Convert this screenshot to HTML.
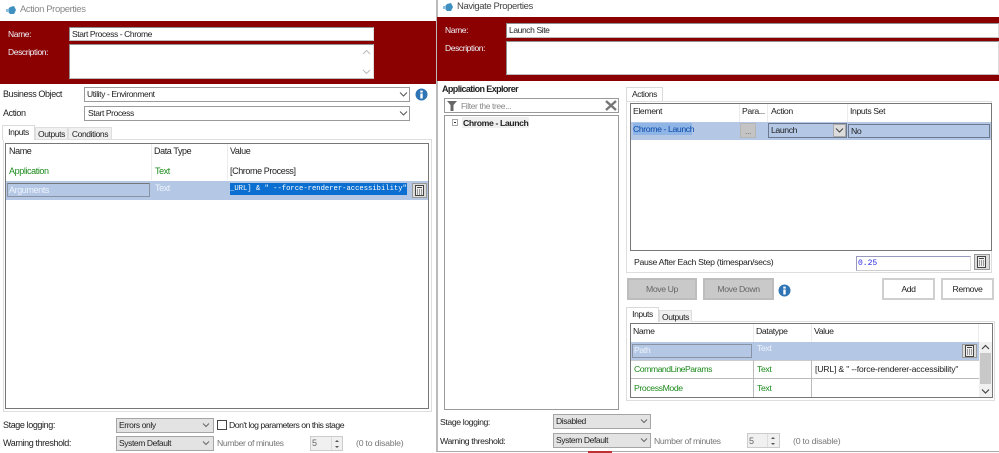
<!DOCTYPE html>
<html><head><meta charset="utf-8"><style>
html,body{margin:0;padding:0;background:#fff}
#r{position:relative;width:999px;height:453px;overflow:hidden;background:#fff;font-family:"Liberation Sans",sans-serif;font-size:9px;letter-spacing:-.4px;color:#222;filter:blur(.3px)}
#r div,#r svg{position:absolute;box-sizing:border-box}
.t{height:14px;line-height:14px;white-space:pre}
.g{color:#1c8a1c}.w{color:#eef3fb}.l{color:#666}
.i{background:#fff;border:1px solid #8f8f8f;border-right-color:#ddd;border-bottom-color:#bbb}
.s{background:#fff;border:1px solid #9a9a9a}
.sg{background:#e3e3e3;border:1px solid #a5a5a5}
.b{background:#8b0000}
.tb{background:#f0f0f0;border:1px solid #dedede;border-bottom:0}
.ta{background:#fff;border:1px solid #dadada;border-bottom:0}
.p{border:1px solid #dedede}
.tbl{border:1px solid #777;background:#fff}
.sel{background:#b4c8e6}
.btn{background:#c9c9c9;border:2px solid #bdbdbd;color:#666;text-align:center;line-height:19px}
.btw{background:#fff;border:2px solid #cfcfcf;color:#222;text-align:center;line-height:19px}
.hl{background:#0a6fd0;color:#fff}
.v{background:#ececec;width:1px}
.c{background:#dcdcdc;border:1px solid #999}
</style></head><body><div id="r">

<!-- LEFT WINDOW -->
<svg style="left:6px;top:5px" width="11" height="11" viewBox="0 0 11 11"><path d="M1 5.5 4 2 8 1 10 5 8 9 4 9Z" fill="#3f8fc0"/><path d="M0 4h3v3H0z" fill="#8cc0de"/></svg>
<div class="t l" style="left:20px;top:3px;font-size:9.5px;color:#888">Action Properties</div>
<div class="b" style="left:0;top:21px;width:437px;height:63px"></div>
<div class="t w" style="left:8px;top:27px;font-size:8.5px">Name:</div>
<div class="t w" style="left:8px;top:45px;font-size:8.5px">Description:</div>
<div class="i t" style="left:69px;top:27px;width:305px;height:14px;line-height:12px;padding-left:2px;font-size:8.5px">Start Process - Chrome</div>
<div class="i" style="left:69px;top:44px;width:305px;height:35px"></div>
<svg style="left:362px;top:67px" width="9" height="9"><path d="M1 3l3.5 3.5L8 3" fill="none" stroke="#bbb"/></svg>
<svg style="left:362px;top:48px" width="9" height="9"><path d="M1 6l3.5-3.5L8 6" fill="none" stroke="#bbb"/></svg>

<div class="t" style="left:3px;top:87px;font-size:9px">Business Object</div>
<div class="t" style="left:3px;top:106px;font-size:9px">Action</div>
<div class="s t" style="left:84px;top:87px;width:326px;height:15px;line-height:13px;padding-left:2px;font-size:8.5px">Utility - Environment</div>
<div class="s t" style="left:84px;top:106px;width:326px;height:15px;line-height:13px;padding-left:3px;font-size:8.5px">Start Process</div>
<svg style="left:399px;top:91px" width="9" height="7"><path d="M1 1.5l3.5 3.5L8 1.5" fill="none" stroke="#555"/></svg>
<svg style="left:399px;top:110px" width="9" height="7"><path d="M1 1.5l3.5 3.5L8 1.5" fill="none" stroke="#555"/></svg>
<svg style="left:415px;top:88px" width="13" height="13"><circle cx="6.5" cy="6.5" r="6" fill="#2f75b5"/><rect x="5.3" y="5.5" width="2.4" height="5" fill="#fff"/><rect x="5.3" y="2.6" width="2.4" height="2" fill="#fff"/></svg>

<div class="p" style="left:3px;top:139px;width:429px;height:273px"></div>
<div class="tb t" style="left:35px;top:127px;width:33px;height:12px;line-height:12px;text-align:center;font-size:8.5px">Outputs</div>
<div class="tb t" style="left:68px;top:127px;width:44px;height:12px;line-height:12px;text-align:center;font-size:8.5px">Conditions</div>
<div class="ta t" style="left:2px;top:125px;width:33px;height:15px;line-height:13px;text-align:center;font-size:8.5px">Inputs</div>
<div class="tbl" style="left:5px;top:143px;width:424px;height:266px"></div>
<div class="t" style="left:9px;top:144px;font-size:9px">Name</div>
<div class="t" style="left:154px;top:144px;font-size:9px">Data Type</div>
<div class="t" style="left:230px;top:144px;font-size:9px">Value</div>
<div class="v" style="left:151px;top:144px;height:36px"></div>
<div class="v" style="left:227px;top:144px;height:36px"></div>
<div class="t g" style="left:9px;top:164px;font-size:9px">Application</div>
<div class="t g" style="left:155px;top:164px;font-size:9px">Text</div>
<div class="t" style="left:230px;top:164px;font-size:9px">[Chrome Process]</div>
<div class="sel" style="left:6px;top:181px;width:422px;height:19px"></div>
<div class="sel" style="left:7px;top:183px;width:143px;height:14px;border:1px solid #8a93a3;border-top-color:#777"></div>
<div class="t w" style="left:9px;top:183px;font-size:9px">Arguments</div>
<div class="t w" style="left:155px;top:181px;font-size:9px">Text</div>
<div class="t hl" style="left:230px;top:183px;width:177px;height:12px;line-height:12px;font-family:'Liberation Mono',monospace;font-size:7.2px;letter-spacing:0;overflow:hidden">_URL] &amp; " --force-renderer-accessibility"</div>
<div class="c" style="left:412px;top:183px;width:15px;height:15px"></div>
<svg style="left:414px;top:185px" width="11" height="11"><rect x="1.5" y="0.5" width="8" height="10" fill="#eee" stroke="#444"/><path d="M3 2.5h5M3 5h1M5 5h1M7 5h1M3 7h1M5 7h1M7 7h1M3 9h1M5 9h1M7 9h1" stroke="#444"/></svg>

<div class="t" style="left:3px;top:418px;font-size:9px">Stage logging:</div>
<div class="t" style="left:3px;top:436px;font-size:9px">Warning threshold:</div>
<div class="sg t" style="left:116px;top:418px;width:98px;height:15px;line-height:13px;padding-left:2px;font-size:8.5px">Errors only</div>
<div class="sg t" style="left:116px;top:436px;width:98px;height:15px;line-height:13px;padding-left:2px;font-size:8.5px">System Default</div>
<svg style="left:202px;top:422px" width="9" height="7"><path d="M1 1.5l3 3 3-3" fill="none" stroke="#666"/></svg>
<svg style="left:202px;top:440px" width="9" height="7"><path d="M1 1.5l3 3 3-3" fill="none" stroke="#666"/></svg>
<div style="left:217px;top:420px;width:10px;height:10px;background:#fff;border:1px solid #444"></div>
<div class="t" style="left:229px;top:418px;font-size:8.7px;letter-spacing:-.5px">Don't log parameters on this stage</div>
<div class="t" style="left:217px;top:436px;font-size:8.7px;color:#777">Number of minutes</div>
<div style="left:310px;top:436px;width:33px;height:15px;background:#f0f0f0;border:1px solid #ccc"></div>
<div class="t" style="left:312px;top:436px;color:#666">5</div>
<div style="left:331px;top:437px;width:1px;height:13px;background:#ddd"></div>
<svg style="left:333px;top:438px" width="8" height="12"><path d="M2 4l2-2 2 2ZM2 8l2 2 2-2Z" fill="#555"/></svg>
<div class="t" style="left:356px;top:436px;font-size:8.7px;letter-spacing:-.2px;color:#777">(0 to disable)</div>

<!-- RIGHT WINDOW -->
<div style="left:436px;top:0;width:563px;height:452px;background:#fff;border-left:2px solid #bbb;border-bottom:1px solid #aaa"></div>
<svg style="left:443px;top:2px" width="11" height="11" viewBox="0 0 11 11"><path d="M1 5.5 4 2 8 1 10 5 8 9 4 9Z" fill="#3f8fc0"/><path d="M0 4h3v3H0z" fill="#8cc0de"/></svg>
<div class="t" style="left:457px;top:0;font-size:9.5px;color:#444">Navigate Properties</div>
<div class="b" style="left:437px;top:17px;width:562px;height:64px"></div>
<div class="t w" style="left:445px;top:23px;font-size:8.5px">Name:</div>
<div class="t w" style="left:445px;top:41px;font-size:8.5px">Description:</div>
<div class="i t" style="left:506px;top:23px;width:493px;height:15px;line-height:13px;padding-left:2px;font-size:8.5px">Launch Site</div>
<div class="i" style="left:506px;top:41px;width:493px;height:34px"></div>

<div class="t" style="left:442px;top:82px;font-size:9px;letter-spacing:-.6px;font-weight:bold">Application Explorer</div>
<div class="s" style="left:444px;top:98px;width:175px;height:15px"></div>
<svg style="left:447px;top:101px" width="11" height="10"><path d="M0 0h10L6.5 4v6h-3V4Z" fill="#666"/></svg>
<div class="t" style="left:461px;top:99px;font-size:8.5px;color:#888">Filter the tree...</div>
<svg style="left:605px;top:100px" width="12" height="11"><path d="M1 1l10 9M11 1L1 10" stroke="#777" stroke-width="2.4"/></svg>
<div class="s" style="left:444px;top:115px;width:175px;height:295px"></div>
<div style="left:452px;top:119px;width:6px;height:7px;border:1px solid #aaa"></div>
<div style="left:454px;top:122px;width:2px;height:1px;background:#333"></div>
<div style="left:462px;top:117px;width:67px;height:11px;background:#f0f0f0"></div>
<div class="t" style="left:463px;top:116px;font-size:8.7px;font-weight:bold;color:#222">Chrome - Launch</div>

<div class="ta t" style="left:626px;top:87px;width:37px;height:15px;line-height:13px;text-align:center;font-size:8.5px">Actions</div>
<div class="p" style="left:626px;top:101px;width:366px;height:172px"></div>
<div class="tbl" style="left:630px;top:103px;width:362px;height:148px"></div>
<div class="t" style="left:633px;top:104px;font-size:8.7px">Element</div>
<div class="t" style="left:742px;top:104px;font-size:8.7px">Para...</div>
<div class="t" style="left:771px;top:104px;font-size:8.7px">Action</div>
<div class="t" style="left:850px;top:104px;font-size:8.7px">Inputs Set</div>
<div class="v" style="left:739px;top:104px;height:18px"></div>
<div class="v" style="left:767px;top:104px;height:18px"></div>
<div class="v" style="left:847px;top:104px;height:18px"></div>
<div class="sel" style="left:631px;top:122px;width:360px;height:18px"></div>
<div class="t hl" style="left:633px;top:123px;width:59px;height:12px;line-height:12px;background:#8fb4e6;color:#0b4aa8;font-size:8.7px">Chrome - Launch</div>
<div style="left:740px;top:123px;width:16px;height:15px;background:#c4c4c4;border:1px solid #b5b5b5;color:#777;text-align:center;line-height:14px">...</div>
<div style="left:768px;top:123px;width:79px;height:15px;border:1px solid #6b7890"></div>
<div class="t" style="left:771px;top:123px;font-size:8.7px">Launch</div>
<div style="left:833px;top:124px;width:13px;height:13px;background:#dcdcdc;border:1px solid #aaa"></div>
<svg style="left:835px;top:127px" width="9" height="7"><path d="M1 1.5l3.5 3.5L8 1.5" fill="none" stroke="#444"/></svg>
<div style="left:848px;top:124px;width:142px;height:14px;border:1px solid #6b7890"></div>
<div class="t" style="left:851px;top:124px;font-size:8.7px">No</div>

<div class="t" style="left:634px;top:255px;font-size:8.7px;letter-spacing:-.32px">Pause After Each Step (timespan/secs)</div>
<div class="t" style="left:856px;top:256px;width:115px;height:15px;line-height:13px;background:#fff;border:1px solid #9a9ac0;border-right-color:#ddd;border-bottom-color:#ccc;padding-left:1px;font-family:'Liberation Mono',monospace;font-size:8px;letter-spacing:0;color:#2a2ae0">0.25</div>
<div class="c" style="left:974px;top:254px;width:16px;height:16px"></div>
<svg style="left:976px;top:256px" width="11" height="12"><rect x="1.5" y="0.5" width="8" height="11" fill="#eee" stroke="#444"/><path d="M3 2.5h5M3 5h1M5 5h1M7 5h1M3 7h1M5 7h1M7 7h1M3 9h1M5 9h1M7 9h1" stroke="#444"/></svg>

<div class="btn" style="left:627px;top:278px;width:70px;height:22px;font-size:8.7px">Move Up</div>
<div class="btn" style="left:703px;top:278px;width:71px;height:22px;font-size:8.7px">Move Down</div>
<svg style="left:778px;top:284px" width="13" height="13"><circle cx="6.5" cy="6.5" r="6" fill="#2f75b5"/><rect x="5.3" y="5.5" width="2.4" height="5" fill="#fff"/><rect x="5.3" y="2.6" width="2.4" height="2" fill="#fff"/></svg>
<div class="btw" style="left:882px;top:278px;width:53px;height:22px;font-size:8.7px">Add</div>
<div class="btw" style="left:941px;top:278px;width:53px;height:22px;font-size:8.7px">Remove</div>

<div class="p" style="left:626px;top:321px;width:369px;height:80px"></div>
<div class="tb t" style="left:659px;top:310px;width:33px;height:12px;line-height:12px;text-align:center;font-size:8.5px">Outputs</div>
<div class="ta t" style="left:626px;top:307px;width:33px;height:15px;line-height:13px;text-align:center;font-size:8.5px">Inputs</div>
<div class="tbl" style="left:630px;top:323px;width:363px;height:75px"></div>
<div class="t" style="left:633px;top:324px;font-size:8.7px">Name</div>
<div class="t" style="left:756px;top:324px;font-size:8.7px">Datatype</div>
<div class="t" style="left:814px;top:324px;font-size:8.7px">Value</div>
<div class="v" style="left:753px;top:324px;height:18px"></div>
<div class="v" style="left:811px;top:324px;height:18px"></div>
<div class="v" style="left:978px;top:324px;height:18px"></div>
<div class="sel" style="left:631px;top:342px;width:348px;height:18px"></div>
<div class="sel" style="left:632px;top:344px;width:120px;height:14px;border:1px solid #8a93a3"></div>
<div class="t w" style="left:634px;top:343px;font-size:8.7px">Path</div>
<div class="t w" style="left:757px;top:341px;font-size:8.7px">Text</div>
<div class="c" style="left:962px;top:344px;width:15px;height:14px"></div>
<svg style="left:964px;top:345px" width="11" height="12"><rect x="1.5" y="0.5" width="8" height="11" fill="#eee" stroke="#444"/><path d="M3 2.5h5M3 5h1M5 5h1M7 5h1M3 7h1M5 7h1M7 7h1M3 9h1M5 9h1M7 9h1" stroke="#444"/></svg>
<div class="t g" style="left:634px;top:362px;font-size:8.7px;letter-spacing:-.5px">CommandLineParams</div>
<div class="t g" style="left:757px;top:362px;font-size:8.7px">Text</div>
<div class="t" style="left:815px;top:362px;font-size:8.7px;letter-spacing:-.2px">[URL] &amp; " --force-renderer-accessibility"</div>
<div class="t g" style="left:634px;top:381px;font-size:8.7px">ProcessMode</div>
<div class="t g" style="left:757px;top:381px;font-size:8.7px">Text</div>
<div style="left:631px;top:378px;width:348px;height:1px;background:#bbb"></div>
<div style="left:631px;top:360px;width:348px;height:1px;background:#ccc"></div>
<div style="left:753px;top:360px;width:1px;height:37px;background:#bbb"></div>
<div style="left:811px;top:360px;width:1px;height:37px;background:#bbb"></div>
<div style="left:979px;top:342px;width:13px;height:55px;background:#f0f0f0"></div>
<div style="left:980px;top:353px;width:11px;height:31px;background:#c8c8c8"></div>
<svg style="left:981px;top:344px" width="9" height="7"><path d="M1 5l3.5-3.5L8 5" fill="none" stroke="#444" stroke-width="1.2"/></svg>
<svg style="left:981px;top:388px" width="9" height="7"><path d="M1 1.5l3.5 3.5L8 1.5" fill="none" stroke="#444" stroke-width="1.2"/></svg>

<div class="t" style="left:440px;top:415px;font-size:8.7px">Stage logging:</div>
<div class="t" style="left:440px;top:434px;font-size:8.7px">Warning threshold:</div>
<div class="sg t" style="left:553px;top:414px;width:98px;height:15px;line-height:13px;padding-left:2px;font-size:8.5px">Disabled</div>
<div class="sg t" style="left:553px;top:433px;width:98px;height:15px;line-height:13px;padding-left:2px;font-size:8.5px">System Default</div>
<svg style="left:640px;top:418px" width="9" height="7"><path d="M1 1.5l3 3 3-3" fill="none" stroke="#666"/></svg>
<svg style="left:640px;top:437px" width="9" height="7"><path d="M1 1.5l3 3 3-3" fill="none" stroke="#666"/></svg>
<div class="t" style="left:654px;top:434px;font-size:8.7px;color:#777">Number of minutes</div>
<div style="left:747px;top:433px;width:33px;height:15px;background:#f0f0f0;border:1px solid #ccc"></div>
<div class="t" style="left:749px;top:434px;color:#666">5</div>
<div style="left:767px;top:434px;width:1px;height:13px;background:#ddd"></div>
<svg style="left:769px;top:435px" width="8" height="12"><path d="M2 4l2-2 2 2ZM2 8l2 2 2-2Z" fill="#555"/></svg>
<div class="t" style="left:793px;top:434px;font-size:8.7px;letter-spacing:-.2px;color:#777">(0 to disable)</div>
<div style="left:588px;top:451px;width:24px;height:2px;background:#c03030"></div>

</div></body></html>
